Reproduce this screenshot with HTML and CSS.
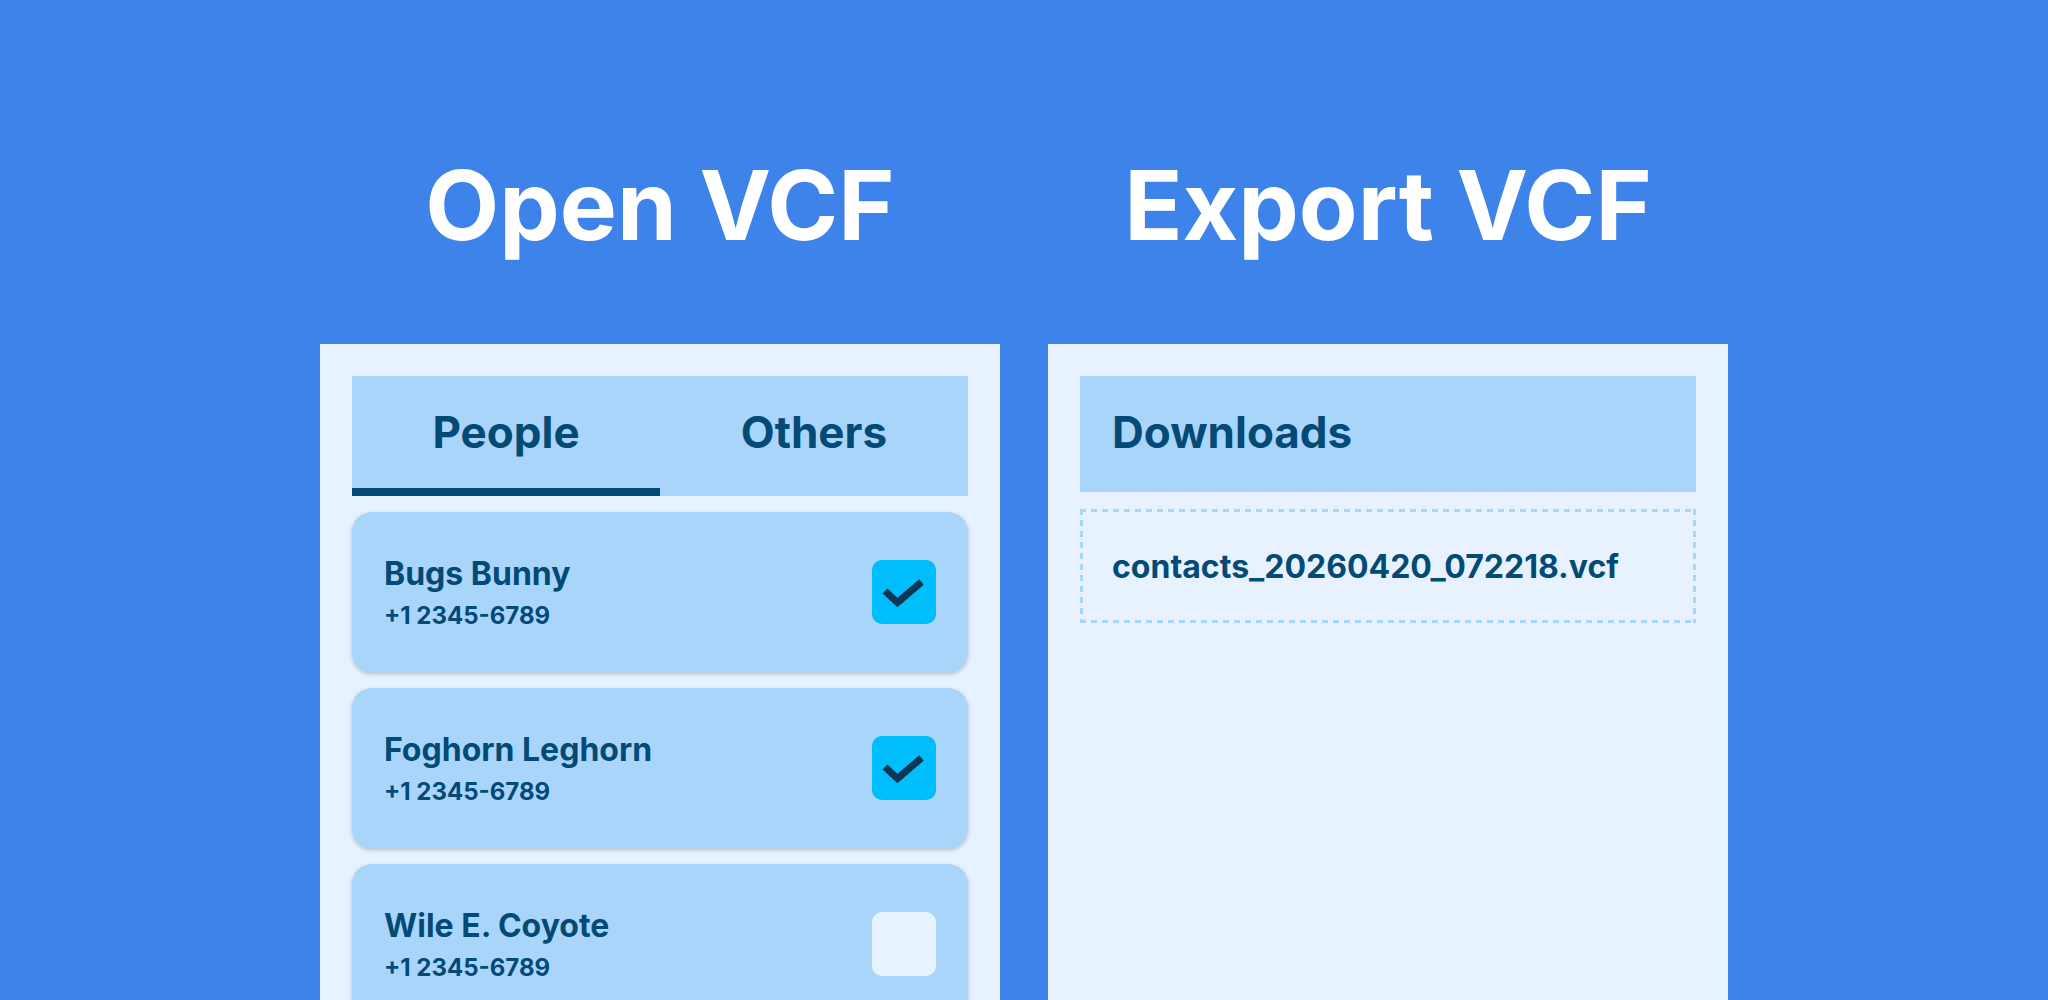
FILE: index.html
```html
<!DOCTYPE html>
<html lang="en">
<head>
  <meta charset="UTF-8" />
  <title>VCF Contacts</title>
  <link rel="stylesheet" href="styles.css">
</head>
<body>
  <div class="page">
    <!-- Open VCF -->
    <section class="column">
      <h1 class="title">Open VCF</h1>
      <div class="panel">
        <div class="tabs">
          <div class="tab active">People</div>
          <div class="tab">Others</div>
        </div>

        <div class="card">
          <div class="contact">
            <div class="name">Bugs Bunny</div>
            <div class="phone">+1 2345-6789</div>
          </div>
          <div class="checkbox checked">
            <svg viewBox="0 0 64 64" width="64" height="64"><polyline points="13,31 25.5,42.5 49.5,22" /></svg>
          </div>
        </div>

        <div class="card">
          <div class="contact">
            <div class="name">Foghorn Leghorn</div>
            <div class="phone">+1 2345-6789</div>
          </div>
          <div class="checkbox checked">
            <svg viewBox="0 0 64 64" width="64" height="64"><polyline points="13,31 25.5,42.5 49.5,22" /></svg>
          </div>
        </div>

        <div class="card">
          <div class="contact">
            <div class="name">Wile E. Coyote</div>
            <div class="phone">+1 2345-6789</div>
          </div>
          <div class="checkbox"></div>
        </div>
      </div>
    </section>

    <!-- Export VCF -->
    <section class="column">
      <h1 class="title">Export VCF</h1>
      <div class="panel">
        <div class="header">Downloads</div>
        <div class="file">contacts_20260420_072218.vcf</div>
      </div>
    </section>
  </div>
</body>
</html>
```

FILE: styles.css
```css
html, body {
  margin: 0;
  height: 1000px;
  overflow: hidden;
}
body {
  background: #3e83e9;
  font-family: 'Inter', 'Noto Sans', sans-serif;
  font-weight: 700;
  color: #034a76;
}
.page {
  display: flex;
  justify-content: center;
  gap: 48px;
  padding-top: 157px;
}
.column {
  width: 680px;
  display: flex;
  flex-direction: column;
}
.title {
  margin: 0 0 91px;
  font-size: 96px;
  line-height: 96px;
  font-weight: 700;
  color: #fff;
  text-align: center;
}
.panel {
  background: #e8f2fe;
  padding: 32px;
  height: 720px;
  box-sizing: border-box;
}

/* Tabs */
.tabs {
  display: flex;
  background: #aad5fb;
  margin-bottom: 16px;
}
.tab {
  flex: 1;
  height: 120px;
  box-sizing: border-box;
  padding-top: 34px;
  font-size: 44px;
  line-height: 44px;
  text-align: center;
}
.tab.active {
  border-bottom: 8px solid #034a76;
}

/* Contact cards */
.card {
  display: flex;
  align-items: center;
  justify-content: space-between;
  height: 160px;
  box-sizing: border-box;
  padding: 0 32px;
  margin-bottom: 16px;
  background: #aad5fb;
  border-radius: 20px;
  box-shadow: 0 2px 4px rgba(0, 40, 80, 0.25);
}
.contact {
  display: flex;
  flex-direction: column;
  gap: 9px;
}
.name {
  font-size: 32px;
  line-height: 38px;
}
.phone {
  font-size: 24px;
  line-height: 28px;
}
.checkbox {
  width: 64px;
  height: 64px;
  border-radius: 10px;
  background: #e8f2fe;
}
.checkbox.checked {
  background: #00bdfb;
}
.checkbox svg {
  display: block;
  fill: none;
  stroke: #0c3654;
  stroke-width: 7;
}

/* Downloads */
.header {
  height: 116px;
  box-sizing: border-box;
  padding: 34px 32px 0;
  background: #aad5fb;
  font-size: 44px;
  line-height: 44px;
  margin-bottom: 17px;
}
.file {
  height: 114px;
  box-sizing: border-box;
  padding: 0 32px;
  display: flex;
  align-items: center;
  font-size: 32px;
  background:
    linear-gradient(to right, #aad5fb 6px, transparent 6px) top left / 11px 3px repeat-x,
    linear-gradient(to right, #aad5fb 6px, transparent 6px) bottom left / 11px 3px repeat-x,
    linear-gradient(to bottom, #aad5fb 6px, transparent 6px) top left / 3px 11px repeat-y,
    linear-gradient(to bottom, #aad5fb 6px, transparent 6px) top right / 3px 11px repeat-y;
}
```
